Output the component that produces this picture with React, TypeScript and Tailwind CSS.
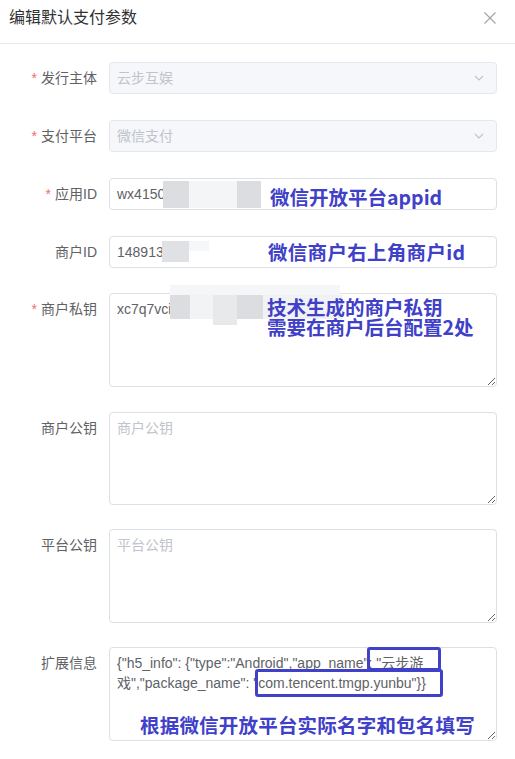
import React from 'react';

const font = { fontFamily: '"Liberation Sans", "Noto Sans CJK SC", sans-serif' };

type Mask = { l: number; t: number; w: number; h: number; c: string };

function Masks({ items }: { items: Mask[] }) {
  return (
    <>
      {items.map((m, i) => (
        <div
          key={i}
          className="absolute pointer-events-none"
          style={{ left: m.l, top: m.t, width: m.w, height: m.h, background: m.c }}
        />
      ))}
    </>
  );
}

function Label({ text, required }: { text: string; required?: boolean }) {
  return (
    <div className="w-[97px] shrink-0 pr-0 text-right text-[14px] leading-[32px] text-[#606266]">
      {required && <span className="mr-[4px] text-[#f56c6c]">*</span>}
      {text}
    </div>
  );
}

function Note({ className, children }: { className: string; children: React.ReactNode }) {
  return (
    <div
      className={`absolute pointer-events-none whitespace-nowrap text-[19.5px] font-bold leading-[20px] text-[#4040c8] ${className}`}
      style={{ fontFamily: '"Noto Sans CJK SC", "Liberation Sans", sans-serif' }}
    >
      {children}
    </div>
  );
}

function Chevron() {
  return (
    <svg width="10" height="6" viewBox="0 0 10 6" className="text-[#c0c4cc]">
      <path d="M1 1l4 4 4-4" fill="none" stroke="currentColor" strokeWidth="1.2" />
    </svg>
  );
}

export default function App() {
  const ext =
    '{"h5_info": {"type":"Android","app_name": "云步游\n戏","package_name": "com.tencent.tmgp.yunbu"}}';

  return (
    <div className="w-[515px] h-[759px] overflow-hidden bg-white" style={font}>
      {/* header */}
      <div className="flex h-[44px] items-start justify-between border-b border-[#e8e8e8] pl-[9px] pr-[19px] pt-[6px]">
        <span className="text-[16px] leading-[24px] text-[#303133]">编辑默认支付参数</span>
        <svg width="12" height="12" viewBox="0 0 12 12" className="mt-[6px] text-[#a0a3a8]">
          <path d="M0.5 0.5l11 11M11.5 0.5l-11 11" stroke="currentColor" strokeWidth="1.1" />
        </svg>
      </div>

      <div className="pl-0 pr-[18px] pt-[18px]">
        {/* 发行主体 */}
        <div className="mb-[26px] flex gap-[12px]">
          <Label text="发行主体" required />
          <div className="flex h-[32px] flex-1 items-center justify-between rounded-[4px] border border-[#e4e7ed] bg-[#f5f7fa] pl-[7px] pr-[12px] text-[14px] text-[#c0c4cc]">
            <span>云步互娱</span>
            <Chevron />
          </div>
        </div>

        {/* 支付平台 */}
        <div className="mb-[26px] flex gap-[12px]">
          <Label text="支付平台" required />
          <div className="flex h-[32px] flex-1 items-center justify-between rounded-[4px] border border-[#e4e7ed] bg-[#f5f7fa] pl-[7px] pr-[12px] text-[14px] text-[#c0c4cc]">
            <span>微信支付</span>
            <Chevron />
          </div>
        </div>

        {/* 应用ID */}
        <div className="mb-[26px] flex gap-[12px]">
          <Label text="应用ID" required />
          <div className="relative flex-1">
            <input
              readOnly
              value="wx4150"
              className="h-[32px] w-full rounded-[4px] border border-[#dcdfe6] bg-white px-[7px] text-[14px] text-[#606266] outline-none"
            />
            <Masks
              items={[
                { l: 54, t: 3, w: 26, h: 27, c: '#dcdde0' },
                { l: 80, t: 3, w: 48, h: 27, c: '#f4f5f6' },
                { l: 128, t: 3, w: 24, h: 27, c: '#dcdde0' },
              ]}
            />
            <Note className="left-[161px] top-[9px]">微信开放平台appid</Note>
          </div>
        </div>

        {/* 商户ID */}
        <div className="mb-[25px] flex gap-[12px]">
          <Label text="商户ID" />
          <div className="relative flex-1">
            <input
              readOnly
              value="148913"
              className="h-[32px] w-full rounded-[4px] border border-[#dcdfe6] bg-white px-[7px] text-[14px] text-[#606266] outline-none"
            />
            <Masks
              items={[
                { l: 53, t: 5, w: 27, h: 21, c: '#e0e1e4' },
                { l: 80, t: 5, w: 20, h: 10, c: '#f6f7f8' },
              ]}
            />
            <Note className="left-[159px] top-[6px] tracking-[0.3px]">微信商户右上角商户id</Note>
          </div>
        </div>

        {/* 商户私钥 */}
        <div className="mb-[25px] flex gap-[12px]">
          <Label text="商户私钥" required />
          <div className="relative flex-1">
            <textarea
              readOnly
              value="xc7q7vci"
              className="block h-[94px] w-full rounded-[4px] border border-[#dcdfe6] bg-white px-[7px] py-[5px] text-[14px] leading-[20px] text-[#606266] outline-none"
            />
            <Masks
              items={[
                { l: 61, t: -8, w: 170, h: 10, c: '#f5f6f7' },
                { l: 61, t: 2, w: 20, h: 24, c: '#dcdde0' },
                { l: 81, t: 2, w: 23, h: 24, c: '#f2f3f4' },
                { l: 104, t: 2, w: 24, h: 30, c: '#e8e9eb' },
                { l: 128, t: 2, w: 26, h: 24, c: '#dcdde0' },
                { l: 154, t: 2, w: 80, h: 24, c: '#f1f2f3' },
              ]}
            />
            <Note className="left-[158px] top-[4px]">
              技术生成的商户私钥
              <br />
              需要在商户后台配置2处
            </Note>
          </div>
        </div>

        {/* 商户公钥 */}
        <div className="mb-[24px] flex gap-[12px]">
          <Label text="商户公钥" />
          <textarea
            readOnly
            placeholder="商户公钥"
            className="block h-[93px] flex-1 rounded-[4px] border border-[#dcdfe6] bg-white px-[7px] py-[5px] text-[14px] leading-[20px] text-[#606266] outline-none placeholder:text-[#c0c4cc]"
          />
        </div>

        {/* 平台公钥 */}
        <div className="mb-[24px] flex gap-[12px]">
          <Label text="平台公钥" />
          <textarea
            readOnly
            placeholder="平台公钥"
            className="block h-[94px] flex-1 rounded-[4px] border border-[#dcdfe6] bg-white px-[7px] py-[5px] text-[14px] leading-[20px] text-[#606266] outline-none placeholder:text-[#c0c4cc]"
          />
        </div>

        {/* 扩展信息 */}
        <div className="flex gap-[12px]">
          <Label text="扩展信息" />
          <div className="relative flex-1">
            <textarea
              readOnly
              value={ext}
              className="block h-[94px] w-full rounded-[4px] border border-[#dcdfe6] bg-white px-[7px] py-[5px] text-[14px] leading-[20px] text-[#606266] outline-none"
            />
            <div className="pointer-events-none absolute left-[258px] top-0 h-[24px] w-[74px] rounded-[3px] border-[3px] border-[#4040c8]" />
            <div className="pointer-events-none absolute left-[146px] top-[22px] h-[28px] w-[188px] rounded-[3px] border-[3px] border-[#4040c8]" />
            <Note className="left-[31px] top-[68px] tracking-[0.2px]">根据微信开放平台实际名字和包名填写</Note>
          </div>
        </div>
      </div>
    </div>
  );
}
